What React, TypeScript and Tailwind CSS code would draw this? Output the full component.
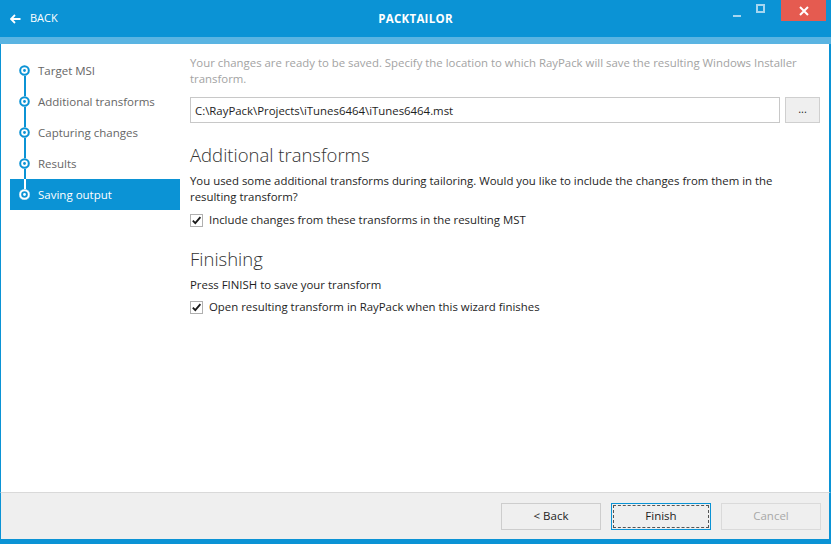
import { useState } from 'react';

const steps = ['Target MSI', 'Additional transforms', 'Capturing changes', 'Results', 'Saving output'];

function StepDot({ active }: { active: boolean }) {
  return (
    <svg width="11" height="11" viewBox="0 0 11 11" className="shrink-0">
      <circle cx="5.5" cy="5.5" r="4.3" fill="none" stroke={active ? '#ffffff' : '#0b93d5'} strokeWidth="2" />
      <circle cx="5.5" cy="5.5" r="1.4" fill={active ? '#ffffff' : '#0b93d5'} />
    </svg>
  );
}

function Check({ checked, label }: { checked: boolean; label: string }) {
  return (
    <label className="flex items-center gap-[6px] h-[20px]">
      <span className="w-[13px] h-[13px] border border-[#b0b0b0] bg-white flex items-center justify-center">
        {checked && (
          <svg width="11" height="11" viewBox="0 0 11 11">
            <path d="M1.8 5.6 L4.3 8.2 L9.4 2.2" fill="none" stroke="#1a1a1a" strokeWidth="1.8" />
          </svg>
        )}
      </span>
      <span>{label}</span>
    </label>
  );
}

export default function App() {
  const [path, setPath] = useState('C:\\RayPack\\Projects\\iTunes6464\\iTunes6464.mst');
  const [includeTransforms, setIncludeTransforms] = useState(true);
  const [openAfter, setOpenAfter] = useState(true);
  const current = 4;

  return (
    <div className="w-[831px] h-[544px] flex flex-col bg-white text-[11.4px] text-[#1e1e1e] font-['Open_Sans',sans-serif] overflow-hidden">
      {/* title bar */}
      <div className="h-[37px] bg-[#0b93d5] flex items-start text-white shrink-0">
        <div className="flex items-center gap-[9px] pl-[10px] h-[37px] w-[300px]">
          <svg width="11" height="10" viewBox="0 0 11 10">
            <path d="M5 1 L1 5 L5 9 M1 5 H10.5" fill="none" stroke="#fff" strokeWidth="1.8" />
          </svg>
          <span className="text-[11px]">BACK</span>
        </div>
        <div className="flex-1 h-[37px] flex items-center justify-center font-bold text-[11.5px] tracking-wide">
          PACKTAILOR
        </div>
        <div className="w-[300px] flex justify-end items-start">
          <div className="w-[20px] h-[21px] flex items-center justify-center">
            <div className="w-[8px] h-[2px] bg-[#a6d6f0] mt-[10px]" />
          </div>
          <div className="w-[26px] h-[21px] flex items-center justify-center">
            <div className="w-[9px] h-[9px] border-2 border-[#a6d6f0] -mt-[4px]" />
          </div>
          <div className="w-[45px] h-[21px] bg-[#e55b50] flex items-center justify-center mr-[5px] ml-[8px]">
            <svg width="10" height="10" viewBox="0 0 10 10">
              <path d="M1 1 L9 9 M9 1 L1 9" stroke="#fff" strokeWidth="2" />
            </svg>
          </div>
        </div>
      </div>
      <div className="h-[7px] bg-[#5ab4e2] shrink-0" />

      {/* body */}
      <div className="flex-1 flex border-l border-r-2 border-[#0b93d5] min-h-0">
        <div className="w-[189px] shrink-0 pt-[11px] pl-[9px]">
          {steps.map((s, i) => (
            <div
              key={s}
              className={`relative h-[31px] w-[170px] flex items-center gap-[8px] pl-[9px] ${
                i === current ? 'bg-[#0b93d5] text-white' : 'text-[#666]'
              }`}
            >
              {i < steps.length - 1 && (
                <div className="absolute left-[14px] top-[16px] h-[31px] w-[2px] bg-[#0b93d5]" />
              )}
              {i === current && <div className="absolute left-[14px] top-0 h-[12px] w-[2px] bg-white" />}
              <div className="relative z-10 bg-white rounded-full">
                <div className={i === current ? 'bg-[#0b93d5] rounded-full' : ''}>
                  <StepDot active={i === current} />
                </div>
              </div>
              <span className="text-[11.5px]">{s}</span>
            </div>
          ))}
        </div>

        <div className="flex-1 pt-[11px] pr-[9px] flex flex-col">
          <p className="text-[#a3a3a3] leading-[16px] pr-[4px]">
            Your changes are ready to be saved. Specify the location to which RayPack will save the resulting Windows Installer transform.
          </p>
          <div className="flex gap-[5px] mt-[10px] h-[26px]">
            <input
              value={path}
              onChange={(e) => setPath(e.target.value)}
              className="flex-1 h-[26px] border border-[#c8c8c8] px-[4px] outline-none text-[11.4px] text-[#1e1e1e]"
            />
            <button className="w-[35px] h-[26px] border border-[#cfcfcf] bg-[#efefef] text-[11px] leading-none pb-[4px]">
              ...
            </button>
          </div>

          <h2 className="text-[18.5px] font-light text-[#333] mt-[20px] leading-[24px]">Additional transforms</h2>
          <p className="leading-[16px] mt-[6px] pr-[24px]">
            You used some additional transforms during tailoring. Would you like to include the changes from them in the resulting transform?
          </p>
          <div className="mt-[5px]" onClick={() => setIncludeTransforms(!includeTransforms)}>
            <Check checked={includeTransforms} label="Include changes from these transforms in the resulting MST" />
          </div>

          <h2 className="text-[18.5px] font-light text-[#333] mt-[17px] leading-[24px]">Finishing</h2>
          <p className="leading-[16px] mt-[6px]">Press FINISH to save your transform</p>
          <div className="mt-[4px]" onClick={() => setOpenAfter(!openAfter)}>
            <Check checked={openAfter} label="Open resulting transform in RayPack when this wizard finishes" />
          </div>
        </div>
      </div>

      {/* footer */}
      <div className="h-[47px] shrink-0 bg-[#efefef] border-t border-[#d9d9d9] border-l border-r-2 border-l-[#0b93d5] border-r-[#0b93d5] flex items-center justify-end gap-[10px] pr-[8px]">
        <button className="w-[100px] h-[27px] border border-[#cdcdcd] bg-[#efefef] text-[#1e1e1e] text-[11.5px]">&lt; Back</button>
        <button className="w-[100px] h-[27px] border border-[#0b93d5] bg-[#efefef] p-[1px]">
          <div className="w-full h-full border border-dashed border-[#555] flex items-center justify-center text-[#1e1e1e] text-[11.5px]">
            Finish
          </div>
        </button>
        <button className="w-[100px] h-[27px] border border-[#dadada] bg-[#efefef] text-[#a8a8a8] text-[11.5px]">Cancel</button>
      </div>
      <div className="h-[5px] bg-[#0b93d5] shrink-0" />
    </div>
  );
}
